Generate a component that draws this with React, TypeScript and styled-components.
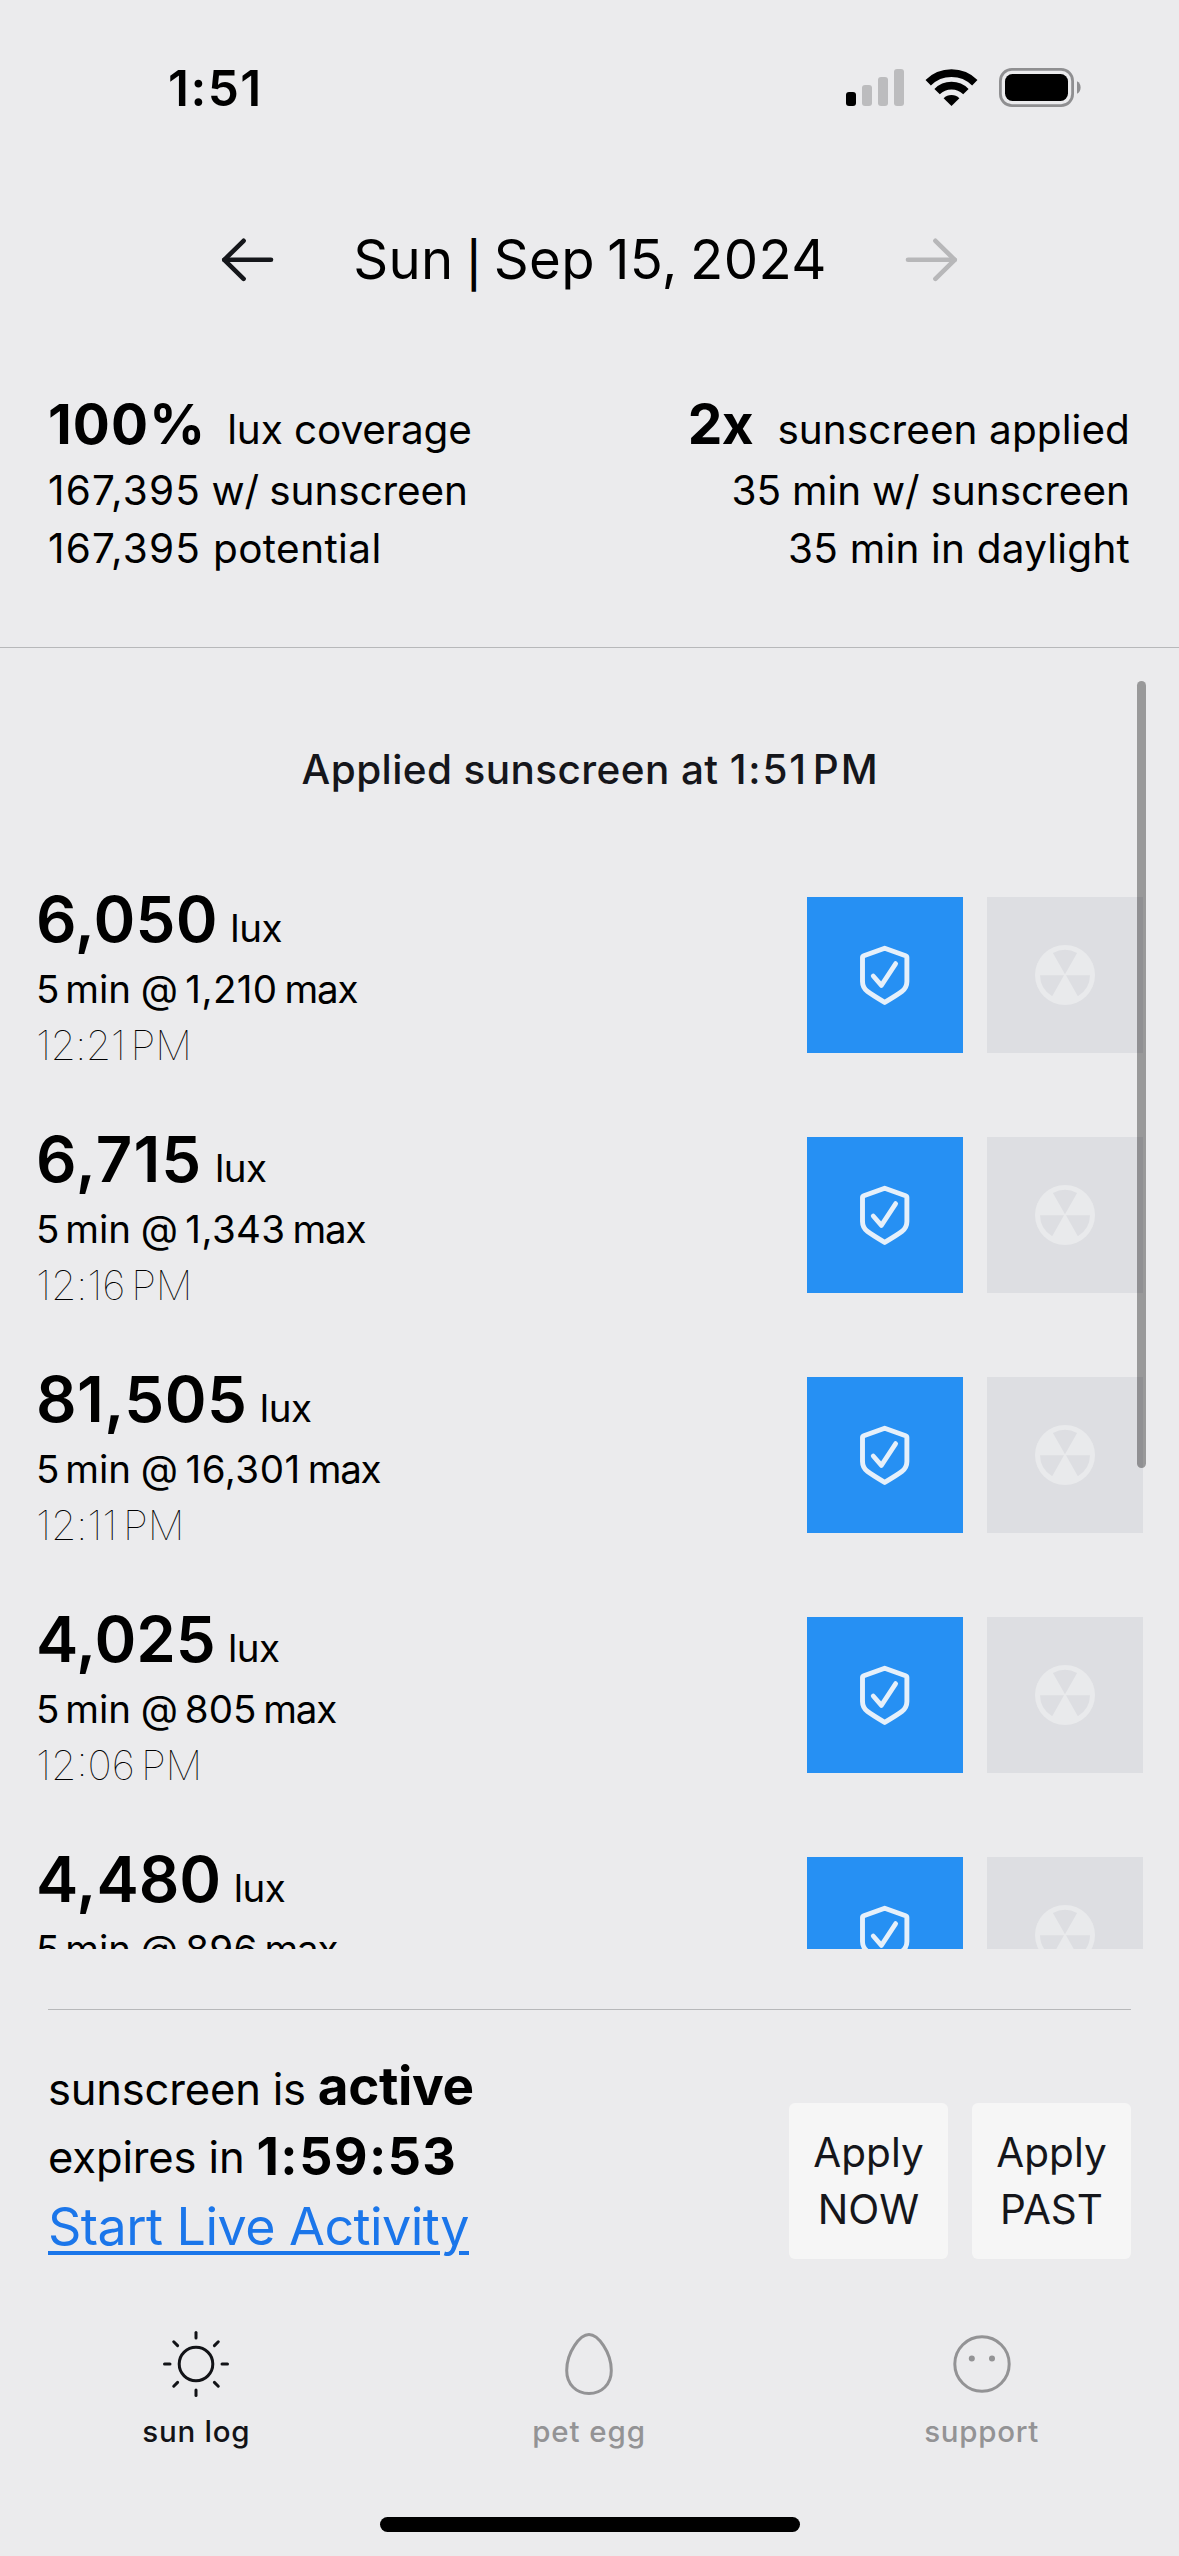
import React from 'react';
import styled, { createGlobalStyle } from 'styled-components';

const BG = '#ebebed';

const GlobalStyle = createGlobalStyle`
  * { box-sizing: border-box; }
  body {
    margin: 0;
    background: ${BG};
    color: #000;
    font-family: Inter, "Liberation Sans", sans-serif;
  }
`;

const Screen = styled.main`
  display: flex;
  flex-direction: column;
  width: 1179px;
  height: 2556px;
  overflow: hidden;
  background: ${BG};
`;

type TxtProps = { $size?: number; $weight?: number; $ls?: number; $ws?: number };

const Txt = styled.span<TxtProps>`
  white-space: pre;
  ${(p) => p.$size && `font-size: ${p.$size}px;`}
  ${(p) => p.$weight && `font-weight: ${p.$weight};`}
  letter-spacing: ${(p) => p.$ls ?? 0}px;
  word-spacing: ${(p) => p.$ws ?? 0}px;
`;

/* ---------- status bar ---------- */

const StatusBar = styled.header`
  display: flex;
  align-items: center;
  justify-content: space-between;
  height: 175px;
  padding: 0 98px 0 168px;
`;

const StatusIcons = styled.div`
  display: flex;
  align-items: center;
  gap: 22px;
`;

const SignalIcon = () => (
  <svg width="58" height="37" viewBox="0 0 58 37">
    <rect x="0" y="23" width="10" height="14" rx="3" fill="#000" />
    <rect x="16" y="16" width="10" height="21" rx="3" fill="#bcbcbe" />
    <rect x="32" y="8" width="10" height="29" rx="3" fill="#bcbcbe" />
    <rect x="48" y="0" width="10" height="37" rx="3" fill="#bcbcbe" />
  </svg>
);

const WifiIcon = () => (
  <svg width="51" height="37" viewBox="0 0 51 37" overflow="visible">
    <g fill="none" stroke="#000" strokeWidth="7.6">
      <path d="M2.2 13.7 A33.1 33.1 0 0 1 48.8 13.7" />
      <path d="M11.1 22.6 A20.3 20.3 0 0 1 39.9 22.6" />
    </g>
    <path d="M25.5 37 L17.6 29.2 A11.3 11.3 0 0 1 33.4 29.2 Z" fill="#000" />
  </svg>
);

const BatteryIcon = () => (
  <svg width="82" height="39" viewBox="0 0 82 39">
    <rect x="1.4" y="1.4" width="72.2" height="36.2" rx="11.5" fill="none" stroke="#8f8f91" strokeWidth="2.8" />
    <rect x="6" y="6" width="63" height="27" rx="7.5" fill="#000" />
    <path d="M78 13.2 C80.4 14.4 81.6 16.8 81.6 19.5 C81.6 22.2 80.4 24.6 78 25.8 Z" fill="#8f8f91" />
  </svg>
);

/* ---------- date header ---------- */

const DateNav = styled.nav`
  display: flex;
  align-items: center;
  justify-content: space-between;
  height: 169px;
  padding: 0 220px;
`;

const DateTitle = styled.h1`
  margin: 0;
  padding: 0 0 2px 1px;
  font-size: 54.5px;
  font-weight: 400;
  line-height: 66px;
`;

const Pipe = styled.span`
  font-size: 45px;
  line-height: 1;
  font-weight: 500;
  vertical-align: -2px;
`;

const Arrow = ({ color, flip }: { color: string; flip?: boolean }) => (
  <svg width="54" height="44" viewBox="0 0 54 44">
    <g
      fill="none"
      stroke={color}
      strokeWidth="4.6"
      strokeLinecap="round"
      strokeLinejoin="round"
      transform={flip ? 'translate(54 0) scale(-1 1)' : undefined}
    >
      <path d="M4.3 21.8 H51" />
      <path d="M23.6 2.8 L4.3 21.8 L23.6 40.8" />
    </g>
  </svg>
);

/* ---------- stats ---------- */

const Stats = styled.section`
  display: flex;
  justify-content: space-between;
  height: 303px;
  padding: 50px 49px 0 48px;
`;

const StatColumn = styled.div<{ $end?: boolean }>`
  display: flex;
  flex-direction: column;
  align-items: ${(p) => (p.$end ? 'flex-end' : 'flex-start')};
  font-size: 40.5px;
  line-height: 58px;
`;

const StatHeadline = styled.div<{ $gap: number }>`
  display: flex;
  align-items: baseline;
  gap: ${(p) => p.$gap}px;
  height: 68px;
  line-height: 60px;
`;

const Rule = styled.div<{ $inset?: number }>`
  flex: none;
  height: 1px;
  margin: 0 ${(p) => p.$inset ?? 0}px;
  background: #b7b8ba;
`;

/* ---------- log ---------- */

const LogViewport = styled.section`
  position: relative;
  flex: none;
  height: 1301px;
  margin-bottom: 60px;
  overflow: hidden;
`;

const AppliedNote = styled.div`
  display: flex;
  align-items: center;
  justify-content: center;
  height: 207px;
  padding: 36px 0 0 2px;
  font-size: 40.5px;
  font-weight: 500;
  color: #15161b;
`;

const LogRow = styled.article`
  display: flex;
  justify-content: space-between;
  height: 240px;
  padding: 0 36px;
`;

const Reading = styled.div`
  display: flex;
  flex-direction: column;
  padding-top: 28px;
`;

const ReadingHeadline = styled.div`
  display: flex;
  align-items: baseline;
  gap: 12.5px;
  height: 78px;
  line-height: 72px;
`;

const ReadingDetail = styled.div`
  font-size: 38.5px;
  line-height: 56px;
`;

const ReadingTime = styled.div`
  margin-top: -1px;
  font-size: 41px;
  line-height: 58px;
  font-weight: 100;
`;

const Tiles = styled.div`
  display: flex;
  gap: 24px;
  padding-top: 42px;
`;

const Tile = styled.div<{ $color: string }>`
  display: flex;
  align-items: center;
  justify-content: center;
  width: 156px;
  height: 156px;
  background: ${(p) => p.$color};
`;

const ScrollThumb = styled.div`
  position: absolute;
  top: 33px;
  right: 33px;
  width: 9px;
  height: 787px;
  border-radius: 4.5px;
  background: rgba(0, 0, 0, 0.35);
`;

const ShieldIcon = () => (
  <svg width="60" height="60" viewBox="0 0 60 60" fill="none" stroke="#e6f0fa" strokeLinecap="round" strokeLinejoin="round">
    <path
      strokeWidth="4.9"
      d="M29.7 3.2 L50.6 10.7 Q51.9 11.2 51.9 12.6 V36.5 C51.9 40.8 50.4 43.8 46.8 46.5 C43.5 49 38 52.4 29.7 57.4 C21.4 52.4 15.9 49 12.6 46.5 C9 43.8 7.5 40.8 7.5 36.5 V12.6 Q7.5 11.2 8.8 10.7 Z"
    />
    <path strokeWidth="4.7" d="M18.2 31 L26.4 40.4 L40.7 18.6" />
  </svg>
);

const RadiationIcon = () => (
  <svg width="60" height="60" viewBox="-30 -30 60 60">
    <circle r="30" fill="#e9eaec" />
    <g fill="#dddee2">
      <path d="M0 -0.8 L-12.1 -21.9 A25 25 0 0 1 12.1 -21.9 Z" />
      <path d="M-1 0.2 L-12.8 21.2 A25 25 0 0 1 -25 0.2 Z" />
      <path d="M1 0.2 L12.8 21.2 A25 25 0 0 0 25 0.2 Z" />
    </g>
  </svg>
);

/* ---------- footer ---------- */

const Footer = styled.section`
  display: flex;
  align-items: flex-end;
  justify-content: space-between;
  height: 252px;
  padding: 0 48px;
`;

const Protection = styled.div`
  display: flex;
  flex-direction: column;
  align-items: flex-start;
  line-height: 70px;
`;

const ProtectionLine = styled.div<{ $align: string; $after?: number }>`
  display: flex;
  align-items: ${(p) => p.$align};
  gap: 12px;
  height: 70px;
  margin-bottom: ${(p) => p.$after ?? 0}px;
`;

const LiveLink = styled.a`
  font-size: 52px;
  letter-spacing: -0.54px;
  white-space: nowrap;
  color: #1b76ea;
  text-decoration: underline;
  text-decoration-thickness: 4px;
  text-underline-offset: 6px;
`;

const Actions = styled.div`
  display: flex;
  gap: 24px;
  padding-bottom: 3px;
`;

const ApplyButton = styled.button`
  width: 159px;
  height: 156px;
  padding: 0;
  border: 0;
  border-radius: 6px;
  background: #f6f6f6;
  color: #15161b;
  font: 400 40.5px/57.5px Inter, "Liberation Sans", sans-serif;
`;

/* ---------- tab bar ---------- */

const TabBar = styled.nav`
  display: grid;
  grid-template-columns: repeat(3, 1fr);
  height: 255px;
  padding: 66px 1px 0 0;
`;

const Tab = styled.div<{ $active?: boolean }>`
  display: flex;
  flex-direction: column;
  align-items: center;
  gap: 13px;
  font-size: 29.5px;
  font-weight: 500;
  line-height: 36px;
  color: ${(p) => (p.$active ? '#121317' : '#939395')};
`;

const HomeIndicator = styled.div`
  flex: none;
  align-self: center;
  width: 420px;
  height: 15px;
  border-radius: 7.5px;
  background: #000;
`;

const SunIcon = () => (
  <svg width="72" height="72" viewBox="-36 -36 72 72" fill="none" stroke="currentColor" strokeWidth="3" strokeLinecap="round">
    <circle r="16.8" />
    {[0, 45, 90, 135, 180, 225, 270, 315].map((a) => (
      <path key={a} d="M0 -26 V-31.5" transform={`rotate(${a})`} />
    ))}
  </svg>
);

const EggIcon = () => (
  <svg width="72" height="72" viewBox="0 0 72 72" fill="none" stroke="currentColor" strokeWidth="3">
    <path d="M36 6.5 C45 6.5 58.3 24 58.3 42.5 C58.3 56.5 48.5 65.5 36 65.5 C23.5 65.5 13.7 56.5 13.7 42.5 C13.7 24 27 6.5 36 6.5 Z" />
  </svg>
);

const FaceIcon = () => (
  <svg width="72" height="72" viewBox="-36 -36 72 72">
    <circle r="27.2" fill="none" stroke="currentColor" strokeWidth="3" />
    <circle cx="-10.2" cy="-5.6" r="3" fill="currentColor" />
    <circle cx="10" cy="-5.6" r="3" fill="currentColor" />
  </svg>
);

const readings = [
  { lux: '6,050', max: '1,210', time: '12:21', ls: 0.2, tls: -0.6, mls: 0.4 },
  { lux: '6,715', max: '1,343', time: '12:16', ls: 1.1, tls: -0.1, mls: 0.4 },
  { lux: '81,505', max: '16,301', time: '12:11', ls: 0.4, tls: -0.1, mls: 0.5 },
  { lux: '4,025', max: '805', time: '12:06', ls: -0.1, tls: 0, mls: 0.1 },
  { lux: '4,480', max: '896', time: '12:01', ls: 0, tls: 0, mls: 0.3 },
];

export default function App() {
  return (
    <>
      <GlobalStyle />
      <Screen>
        <StatusBar>
          <Txt $size={49.5} $weight={600} $ls={1.5}>1:51</Txt>
          <StatusIcons>
            <SignalIcon />
            <WifiIcon />
            <BatteryIcon />
          </StatusIcons>
        </StatusBar>

        <DateNav>
          <Arrow color="#15171b" />
          <DateTitle>
            <Txt $ls={0.4} $ws={-3.4}>Sun </Txt>
            <Pipe>|</Pipe>
            <Txt $ls={0.4} $ws={-3.6}> Sep 15, 2024</Txt>
          </DateTitle>
          <Arrow color="#b7b7b9" flip />
        </DateNav>

        <Stats>
          <StatColumn>
            <StatHeadline $gap={21}>
              <Txt $size={55} $weight={650} $ls={1.1}>100%</Txt>
              <Txt $ls={-0.1}>lux coverage</Txt>
            </StatHeadline>
            <div>
              <Txt $ls={1.2}>167,395</Txt>
              <Txt $ls={-0.1} $ws={-1}> w/ sunscreen</Txt>
            </div>
            <div>
              <Txt $ls={1.2}>167,395</Txt>
              <Txt $ls={0.4}> potential</Txt>
            </div>
          </StatColumn>
          <StatColumn $end>
            <StatHeadline $gap={24}>
              <Txt $size={55} $weight={650} $ls={-0.4}>2x</Txt>
              <Txt $ls={0.08}>sunscreen applied</Txt>
            </StatHeadline>
            <Txt $ls={0} $ws={-0.6}>35 min w/ sunscreen</Txt>
            <Txt $ls={0.2}>35 min in daylight</Txt>
          </StatColumn>
        </Stats>
        <Rule />

        <LogViewport>
          <AppliedNote>
            <Txt $ls={0.4}>Applied sunscreen at </Txt>
            <Txt $ls={1.8} $ws={-7.6}>1:51 PM</Txt>
          </AppliedNote>
          {readings.map((r) => (
            <LogRow key={r.time}>
              <Reading>
                <ReadingHeadline>
                  <Txt $size={63.5} $weight={600} $ls={r.ls}>{r.lux}</Txt>
                  <Txt $size={38.5} $ls={-0.5}>lux</Txt>
                </ReadingHeadline>
                <ReadingDetail>
                  <Txt $ws={-5}>5 </Txt>
                  <Txt $ws={-1}>min </Txt>
                  <Txt $ls={r.mls} $ws={-4.3}>{`@ ${r.max} `}</Txt>
                  <Txt $ls={-1.2}>max</Txt>
                </ReadingDetail>
                <ReadingTime>
                  <Txt $ls={r.tls} $ws={-5.6}>{`${r.time} `}</Txt>
                  <Txt $ls={-0.2}>PM</Txt>
                </ReadingTime>
              </Reading>
              <Tiles>
                <Tile $color="#2690f3"><ShieldIcon /></Tile>
                <Tile $color="#dddee2"><RadiationIcon /></Tile>
              </Tiles>
            </LogRow>
          ))}
          <ScrollThumb />
        </LogViewport>

        <Rule $inset={48} />
        <Footer>
          <Protection>
            <ProtectionLine $align="baseline" $after={1}>
              <Txt $size={43.5} $ls={-0.18}>sunscreen is</Txt>
              <Txt $size={53} $weight={700} $ls={-0.4}>active</Txt>
            </ProtectionLine>
            <ProtectionLine $align="center">
              <Txt $size={43.5} $ls={-0.12}>expires in</Txt>
              <Txt $size={52} $weight={700} $ls={1.4}>1:59:53</Txt>
            </ProtectionLine>
            <LiveLink>Start Live Activity</LiveLink>
          </Protection>
          <Actions>
            <ApplyButton>Apply<br />NOW</ApplyButton>
            <ApplyButton>Apply<br />PAST</ApplyButton>
          </Actions>
        </Footer>

        <TabBar>
          <Tab $active>
            <SunIcon />
            <Txt $ls={0.75}>sun log</Txt>
          </Tab>
          <Tab>
            <EggIcon />
            <Txt $ls={0.9}>pet egg</Txt>
          </Tab>
          <Tab>
            <FaceIcon />
            <Txt $ls={0.7}>support</Txt>
          </Tab>
        </TabBar>
        <HomeIndicator />
      </Screen>
    </>
  );
}
